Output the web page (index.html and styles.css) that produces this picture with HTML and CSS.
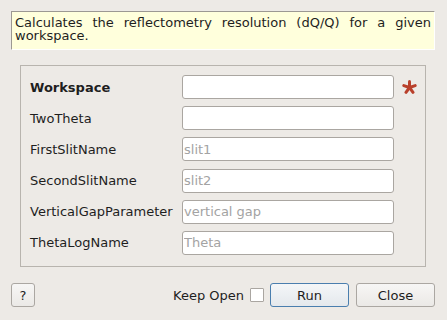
FILE: index.html
```html
<!DOCTYPE html>
<html lang="en">
<head>
    <meta charset="UTF-8">
    <title>Algorithm Dialog</title>
    <link rel="stylesheet" href="styles.css">
</head>
<body>
    <div class="dialog">
        <div class="description">Calculates the reflectometry resolution (dQ/Q) for a given workspace.</div>
        <div class="group-box">
            <div class="prop-grid">
                <label class="prop-label required">Workspace</label>
                <input type="text" class="prop-input">
                <span class="star">
                    <svg width="15" height="14" viewBox="0 0 15 14">
                        <g stroke="#b9402b" stroke-width="3" stroke-linecap="round">
                            <line x1="7.5" y1="7.5" x2="7.5" y2="1.5"/>
                            <line x1="7.5" y1="7.5" x2="1.8" y2="5.6"/>
                            <line x1="7.5" y1="7.5" x2="13.2" y2="5.6"/>
                            <line x1="7.5" y1="7.5" x2="4" y2="12.3"/>
                            <line x1="7.5" y1="7.5" x2="11" y2="12.3"/>
                        </g>
                    </svg>
                </span>

                <label class="prop-label">TwoTheta</label>
                <input type="text" class="prop-input">
                <span></span>

                <label class="prop-label">FirstSlitName</label>
                <input type="text" class="prop-input" placeholder="slit1">
                <span></span>

                <label class="prop-label">SecondSlitName</label>
                <input type="text" class="prop-input" placeholder="slit2">
                <span></span>

                <label class="prop-label">VerticalGapParameter</label>
                <input type="text" class="prop-input" placeholder="vertical gap">
                <span></span>

                <label class="prop-label">ThetaLogName</label>
                <input type="text" class="prop-input" placeholder="Theta">
                <span></span>
            </div>
        </div>
        <div class="button-row">
            <button class="btn help-btn">?</button>
            <div class="spacer"></div>
            <label class="keep-open">Keep Open <span class="check"></span></label>
            <button class="btn run-btn">Run</button>
            <button class="btn">Close</button>
        </div>
    </div>
</body>
</html>
```

FILE: styles.css
```css
body {
    margin: 0;
    padding: 0;
    background-color: #edeae6;
    font-family: "DejaVu Sans", sans-serif;
    font-size: 13px;
    color: #1e1e1e;
}
.dialog {
    width: 447px;
    height: 320px;
    padding: 11px 12px 0 11px;
    box-sizing: border-box;
}
.description {
    height: 39px;
    box-sizing: border-box;
    background-color: #ffffdc;
    border-top: 1px solid #9c9893;
    border-left: 1px solid #9c9893;
    border-right: 1px solid #ffffff;
    border-bottom: 1px solid #ffffff;
    padding: 4px 3px 0 3px;
    line-height: 13px;
    text-align: justify;
}
.group-box {
    margin: 15px 9px 0 9px;
    height: 202px;
    box-sizing: border-box;
    border: 1px solid #b8b4ae;
    padding: 9px 0 0 9px;
}
.prop-grid {
    display: grid;
    grid-template-columns: 145px 212px 23px;
    grid-auto-rows: 24px;
    column-gap: 7px;
    row-gap: 7.2px;
    align-items: center;
}
.prop-label {
    white-space: nowrap;
}
.prop-label.required {
    font-weight: bold;
}
.prop-input {
    height: 24px;
    width: 212px;
    box-sizing: border-box;
    border: 1px solid #aaa6a1;
    border-radius: 3px;
    background-color: #fff;
    padding: 0 1px;
    font-family: "DejaVu Sans", sans-serif;
    font-size: 13px;
    outline: none;
}
.prop-input::placeholder {
    color: #a3a3a3;
}
.star {
    display: flex;
    align-items: center;
    padding-left: 1px;
}
.button-row {
    display: flex;
    align-items: center;
    margin-top: 16px;
    height: 24px;
}
.spacer {
    flex: 1;
}
.btn {
    height: 24px;
    width: 79px;
    box-sizing: border-box;
    border: 1px solid #aba7a2;
    border-radius: 3px;
    background: linear-gradient(#f7f6f5, #ebe9e6);
    font-family: "DejaVu Sans", sans-serif;
    font-size: 13px;
    color: #1e1e1e;
    margin-left: 7px;
    padding: 0;
}
.help-btn {
    width: 24px;
    margin-left: 0;
}
.run-btn {
    border-color: #4a7eae;
    background: linear-gradient(#f4f6f8, #e4e8ec);
}
.keep-open {
    display: flex;
    align-items: center;
    gap: 6px;
    margin-right: -1px;
}
.check {
    width: 14px;
    height: 14px;
    box-sizing: border-box;
    border: 1px solid #aaa6a1;
    background-color: #fff;
    border-radius: 1px;
}
```
